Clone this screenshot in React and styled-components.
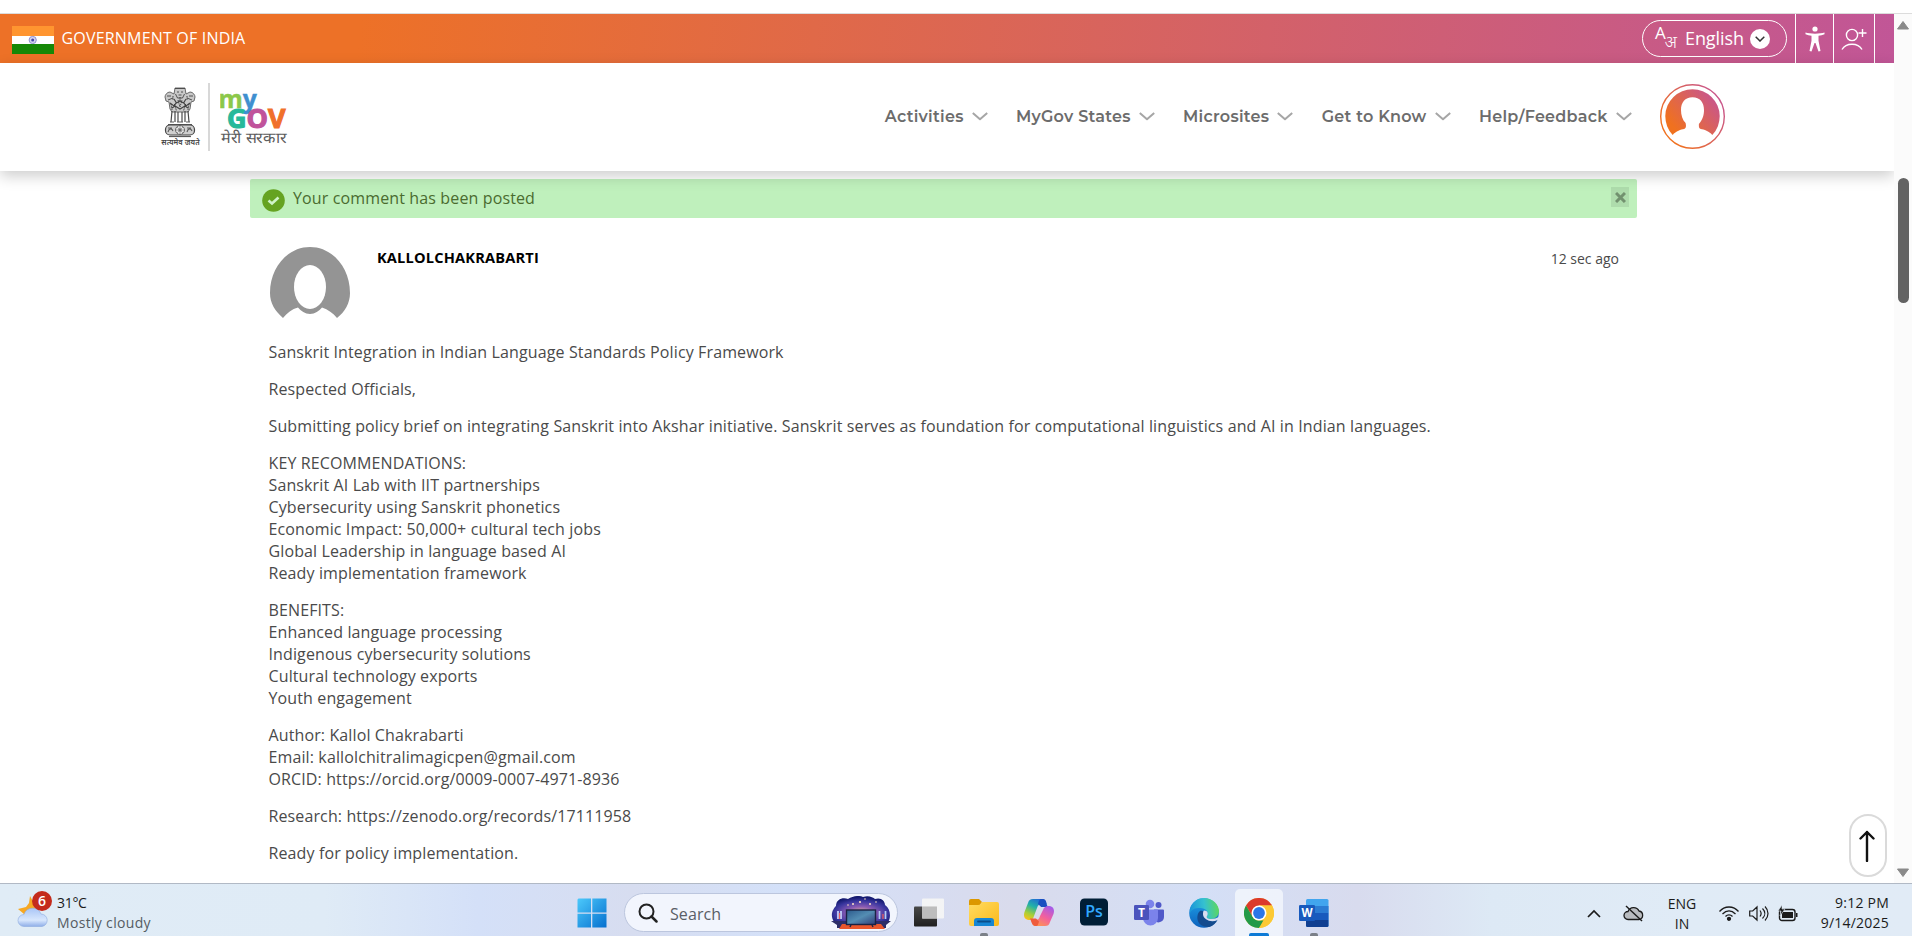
import React from 'react';
import styled, { createGlobalStyle } from 'styled-components';

const Global = createGlobalStyle`
  *{box-sizing:border-box}
  html,body{margin:0;padding:0;overflow:hidden;background:#fff}
  body{font-family:"Open Sans","Noto Sans",sans-serif;color:#4a4a4a}
  svg{display:block;flex:none}
  p{margin:0}
`;

const Screen = styled.div`width:1912px;height:936px;display:flex;flex-direction:column;background:#fff;overflow:hidden;`;
const BrowserEdge = styled.div`height:14px;flex:none;border-bottom:1px solid #dcdcdc;background:#fff;`;
const Viewport = styled.div`height:869px;flex:none;display:flex;`;
const Site = styled.div`width:1894px;display:flex;flex-direction:column;overflow:hidden;position:relative;`;

const TopBar = styled.div`height:49px;flex:none;display:flex;align-items:center;padding-left:12px;color:#fff;
  background:linear-gradient(95deg,#ed7127 0%,#ed7127 19%,#c15697 100%);`;
const Flag = styled.div`width:42px;height:28px;margin-top:2px;`;
const GovTitle = styled.div`margin-left:7.5px;font-size:16px;font-weight:500;letter-spacing:.19px;margin-right:auto;white-space:nowrap;margin-top:-2px;`;
const LangPill = styled.div`width:145px;height:37px;border:1px solid #fff;border-radius:19px;display:flex;align-items:center;padding:0 16px 0 12px;margin-right:8px;`;
const LangName = styled.span`font-size:18px;font-weight:500;margin-left:6px;line-height:24px;width:58px;white-space:nowrap;letter-spacing:-0.1px;margin-top:-1px;`;
const LangGlyph = styled.div`display:flex;align-items:flex-start;font-size:17px;line-height:16px;width:24px;height:28px;white-space:nowrap;
  span{margin-top:7px;font-size:17px;line-height:19px;margin-left:-1px;font-weight:300}`;
const LangCaret = styled.div`width:20px;height:20px;border-radius:50%;background:#fff;display:grid;place-items:center;margin-left:7px;flex:none;`;
const TopTool = styled.div`width:${p => p.$w}px;height:49px;border-left:1px solid #fff;display:flex;align-items:center;justify-content:center;`;

const Header = styled.header`height:108px;flex:none;display:flex;align-items:center;background:#fff;padding-left:161px;box-shadow:0 5px 14px rgba(0,0,0,.2);position:relative;z-index:2;`;
const EmblemBox = styled.div`width:38px;height:60px;display:flex;flex-direction:column;align-items:center;`;
const Motto = styled.div`font-size:7.4px;line-height:8px;font-weight:600;color:#444;white-space:nowrap;letter-spacing:.1px;padding-left:1px;`;
const Rule = styled.div`width:1.5px;height:68px;background:#d8d8d8;margin:0 10px 0 9px;`;
const LogoBox = styled.div`width:70px;height:72px;margin-top:-4px;`;
const Nav = styled.nav`margin-left:auto;display:flex;align-items:center;margin-bottom:2px;`;
const NavItem = styled.div`display:flex;align-items:center;margin-right:28.4px;`;
const NavLabel = styled.span`font-family:"Montserrat","Inter","Open Sans",sans-serif;font-weight:600;font-size:16px;color:#6c6c6c;letter-spacing:.26px;white-space:nowrap;margin-right:8px;`;
const Account = styled.div`margin:0 169px 2px 0;`;

const Content = styled.main`width:1387px;margin-left:250px;padding-top:8px;`;
const Alert = styled.div`height:39px;background:#bff0bc;border-radius:2px;display:flex;align-items:center;padding:0 8px 0 12px;`;
const AlertIcon = styled.div`margin-top:3px;`;
const AlertText = styled.span`font-size:16px;color:#4a6b2f;margin-left:8px;margin-right:auto;line-height:22px;margin-top:-1px;letter-spacing:.13px;`;
const CloseBtn = styled.div`width:18px;height:20px;background:#aedcac;display:grid;place-items:center;margin-top:-3px;`;
const Comment = styled.article`padding:29px 18px 0 19.5px;`;
const CommentHead = styled.div`display:flex;height:83px;`;
const AuthorName = styled.div`margin:-1px auto 0 27.5px;font-size:14.6px;font-weight:700;color:#000;line-height:22px;letter-spacing:.18px;`;
const Ago = styled.div`font-size:14px;line-height:22px;margin-top:1px;color:#4a4a4a;`;
const Body = styled.div`margin:11px 0 0 -1px;font-size:16px;line-height:22px;color:#4a4a4a;letter-spacing:.12px;p{margin-bottom:15px;white-space:pre-line}`;

const Scrollbar = styled.div`width:18px;background:#fbfbfb;display:flex;flex-direction:column;align-items:center;padding:6px 0 5px;`;
const Thumb = styled.div`width:11px;height:125px;border-radius:6px;background:#636363;margin-top:148px;margin-bottom:auto;`;
const ToTop = styled.div`position:absolute;left:1849px;top:800px;width:38px;height:63px;border:2px solid #dadada;border-radius:19px;background:#fff;display:grid;place-items:center;padding-right:2px;`;

const Taskbar = styled.footer`height:53px;flex:none;border-top:1px solid #b1b9c5;display:flex;
  background:linear-gradient(90deg,#e0ecf6 0%,#dfebf6 17%,#d4e0f8 25%,#d7ddf0 33%,#d4e1f9 41%,#d7ddf2 48%,#d9dbec 53%,#d4dff6 63%,#d8dbee 71%,#dde9f5 78%,#e0ebf6 88%,#e1ebf6 100%);
  font-family:"Open Sans","Noto Sans",sans-serif;color:#1b1b1b;`;
const Weather = styled.div`width:560px;display:flex;padding:7px 0 0 16px;`;
const WeatherText = styled.div`margin-left:5px;font-size:14px;line-height:20px;margin-top:2px;span{display:block;white-space:nowrap;letter-spacing:-.3px}span+span{color:#555c63;letter-spacing:.32px}`;
const Apps = styled.div`display:flex;padding-top:5px;margin-left:8px;`;
const AppSlot = styled.div`width:48px;height:47px;margin-right:7px;border-radius:5px 5px 0 0;background:${p => p.$active ? 'rgba(244,247,253,.8)' : 'transparent'};display:flex;flex-direction:column;align-items:center;padding-top:9px;`;
const Dot = styled.div`width:${p => p.$w}px;height:3px;border-radius:2px 2px 0 0;background:${p => p.$c};margin-top:auto;`;
const SearchBox = styled.div`width:274px;height:39px;border-radius:20px;background:#f2f5fd;border:1px solid #bcc6de;margin:4px 7px 0 1px;display:flex;align-items:center;padding:0 6px 0 13px;`;
const SearchText = styled.span`font-size:16px;color:#5a5e66;margin-left:12px;margin-right:auto;margin-top:2px;letter-spacing:.1px;`;
const Tray = styled.div`display:flex;margin-left:auto;align-items:flex-start;`;
const Lang = styled.div`width:32px;text-align:center;font-size:14px;line-height:20px;margin:10px 21px 0 22px;`;
const Clock = styled.div`width:91px;text-align:right;font-size:14px;line-height:20px;margin:9px 23px 0 0;white-space:nowrap;letter-spacing:.22px;`;
const TrayIcon = styled.div`height:52px;display:flex;align-items:center;margin-right:${p => p.$mr}px;padding-top:6px;`;

const NAV = ['Activities', 'MyGov States', 'Microsites', 'Get to Know', 'Help/Feedback'];

const COMMENT = [
  'Sanskrit Integration in Indian Language Standards Policy Framework',
  'Respected Officials,',
  'Submitting policy brief on integrating Sanskrit into Akshar initiative. Sanskrit serves as foundation for computational linguistics and AI in Indian languages.',
  'KEY RECOMMENDATIONS:\nSanskrit AI Lab with IIT partnerships\nCybersecurity using Sanskrit phonetics\nEconomic Impact: 50,000+ cultural tech jobs\nGlobal Leadership in language based AI\nReady implementation framework',
  'BENEFITS:\nEnhanced language processing\nIndigenous cybersecurity solutions\nCultural technology exports\nYouth engagement',
  'Author: Kallol Chakrabarti\nEmail: kallolchitralimagicpen@gmail.com\nORCID: https://orcid.org/0009-0007-4971-8936',
  'Research: https://zenodo.org/records/17111958',
  'Ready for policy implementation.',
];

const IndiaFlag = () => (
  <svg width="42" height="28" viewBox="0 0 42 28">
    <rect width="42" height="10" fill="#ff9530" /><rect y="10" width="42" height="8" fill="#fff" />
    <rect y="18" width="42" height="10" fill="#168807" />
    <circle cx="20.7" cy="14" r="3.6" fill="#d5d5f0" stroke="#8f8fd0" strokeWidth="1" />
    <circle cx="20.7" cy="14" r="1.5" fill="#4646a8" />
  </svg>
);

const Emblem = () => (
  <svg width="34" height="51" viewBox="0 0 34 51" fill="none" stroke="#5c5c5c" strokeWidth=".9">
    <path d="M12 1h10l1 6 4-2c3 0 5 3 5 5l-1 4-3 1-1 7-2 3H9l-2-3-1-7-3-1-1-4c0-2 2-5 5-5l4 2z" fill="#c9c9c9" />
    <path d="M12 1.500h10M14 5h2m2 0h2M15.500 8h3M12.500 7l2 4h5l2-4M4 9h4m18 0h4M5 13l5-2m19 2-5-2" stroke="#444" />
    <path d="M11 12l2.500 4 3.500-2 3.500 2 2.500-4M7 16l4 3 2-3m14 0-4 3-2-3M9 21l3-2 5 3 5-3 3 2" stroke="#444" strokeWidth="1.200" />
    <path d="M15 13l2 7 2-7M11.500 17l2 7m9-7-2 7M8 17l1 6m17-6-1 6M17 10v4M10 9v4m14-4v4" stroke="#333" strokeDasharray="1.500 .8" />
    <path d="M9 24l-1 11m4-11v11m3-10v10m4-10v10m3-11v11m3-11 1 11" strokeWidth="1.200" stroke="#4a4a4a" />
    <path d="M5 37.500h24M7 35h4m3 0h6m3 0h4" strokeWidth="1" />
    <rect x="2.500" y="38" width="29" height="10" rx="4.500" fill="#cfcfcf" strokeWidth="1.200" stroke="#444" />
    <circle cx="17" cy="43" r="4.500" fill="#e8e8e8" /><circle cx="17" cy="43" r="1.200" />
    <path d="M17 38.500v9M12.500 43h9M14 40l6 6m0-6-6 6" strokeWidth=".5" />
    <path d="M5 45c1-4 4-4 5-1m14 1c1-4 4-4 5-1M5 41h4m15 0h4" strokeWidth="1.100" />
    <path d="M6 49.500h22" strokeWidth="1.200" />
  </svg>
);

const MyGovLogo = () => (
  <svg width="70" height="72" viewBox="0 -12 70 72" fontFamily='"Open Sans",sans-serif' fontWeight="700">
    <text x="-1.500" y="16.500" fontSize="25" strokeWidth=".4" textLength="38.500" lengthAdjust="spacingAndGlyphs"><tspan fill="#8cc84a" stroke="#8cc84a">m</tspan><tspan fill="#3f8fd0" stroke="#3f8fd0">y</tspan></text>
    <text x="7" y="37" fontSize="26.500" strokeWidth="1.100" textLength="58.500" lengthAdjust="spacingAndGlyphs"><tspan fill="#26b99a" stroke="#26b99a">G</tspan><tspan fill="#c0539b" stroke="#c0539b">O</tspan><tspan fill="#f0702a" stroke="#f0702a">V</tspan></text>
    <text x="1" y="52" fontSize="15" fontWeight="300" fill="#5c5c5c" textLength="65.500" lengthAdjust="spacingAndGlyphs">मेरी सरकार</text>
  </svg>
);

const Caret = () => (
  <svg width="16" height="9" viewBox="0 0 16 9" fill="none" stroke="#a6a6a6" strokeWidth="2" strokeLinejoin="round"><path d="M.8 1l7.200 6.300L15.200 1" /></svg>
);

const UserAvatar = () => (
  <svg width="65" height="65" viewBox="0 0 65 65">
    <defs>
      <linearGradient id="av" x1=".1" y1=".75" x2=".9" y2=".2"><stop offset="0" stopColor="#f0711f" /><stop offset="1" stopColor="#c9568a" /></linearGradient>
    </defs>
    <circle cx="32.5" cy="32.5" r="31.8" fill="#fff" stroke="url(#av)" strokeWidth="1.4" />
    <path d="M12.7 51A27.2 27.2 0 1 1 52.3 51C49 47 44 45.5 40.8 45c-2-.5-2-2-1.9-5 4-5 5.1-9 5.1-14 0-7.500-4-12.700-11.500-12.700S21 18.500 21 26c0 5 1.500 10 4.600 13 .7 3 .5 5.500-1.500 6C21 45.500 16 47 12.700 51z" fill="url(#av)" />
  </svg>
);

const CommenterAvatar = () => (
  <svg width="80" height="72" viewBox="0 0 80 72">
    <path d="M13 71C5 64 0 56 0 46 0 20 18 0 40 0s40 20 40 46c0 10-5 19-13 25-4-5-9-8.500-15-10.500C49 64 45 67 40 67s-9-3-12-6.500C22 62 17 66 13 71z" fill="#949494" />
    <ellipse cx="40" cy="40" rx="16" ry="22" fill="#fff" />
  </svg>
);

const WeatherIcon = () => (
  <svg width="36" height="38" viewBox="0 0 36 38">
    <defs><linearGradient id="cl" x1="0" y1="0" x2="0" y2="1"><stop offset="0" stopColor="#a9c5f6" /><stop offset=".65" stopColor="#d8e7fd" /><stop offset="1" stopColor="#8faee8" /></linearGradient></defs>
    <path d="M14 5l5 9-1 12-10-3-6-5 8-2 3-4z" fill="#f7a823" />
    <path d="M8 35.500a6 6 0 0 1 0-12A9 9 0 0 1 25 23a6.300 6.300 0 0 1 1 12.500z" fill="url(#cl)" stroke="#8dabdf" strokeWidth=".6" />
    <circle cx="26" cy="10" r="10" fill="#c42b1c" />
    <text x="26" y="15" fontSize="14" fontWeight="600" fill="#fff" textAnchor="middle">6</text>
  </svg>
);

const WindowsIcon = () => (
  <svg width="30" height="30" viewBox="0 0 30 30">
    <defs><linearGradient id="wi" x1="0" y1="0" x2="1" y2="1"><stop offset="0" stopColor="#4cc9fb" /><stop offset="1" stopColor="#0670cf" /></linearGradient></defs>
    <path d="M1.500 .5H14v14H.5v-13zM15.300 .5H29.500v14H15.300zM.5 15.700H14v13.800H.5zM15.300 15.700h14.200v13.800H15.300z" fill="url(#wi)" />
  </svg>
);

const SearchArt = () => (
  <svg width="60" height="34" viewBox="0 0 60 34">
    <defs>
      <radialGradient id="gl" cx=".5" cy=".65" r=".6"><stop offset="0" stopColor="#f5c394" /><stop offset=".4" stopColor="#8a5bb3" /><stop offset=".75" stopColor="#3b37a0" /><stop offset="1" stopColor="#141a70" /></radialGradient>
      <linearGradient id="tv" x1="0" y1="0" x2="1" y2="1"><stop offset="0" stopColor="#2b5a8c" /><stop offset=".5" stopColor="#548db3" /><stop offset="1" stopColor="#303b76" /></linearGradient>
    </defs>
    <path d="M3 26C-2 18 3 12 5 10 5 3 12 1 17 3c5-3 11-4 15-2 5-2 10 0 12 2 6-2 10 2 10 6 6 4 6 13 3 17z" fill="url(#gl)" />
    <path d="M0 25h60l-5 4v3H6v-3z" fill="#2d2d68" /><path d="M11 28h39l4 5H8z" fill="#e9562c" />
    <rect x="15.500" y="14" width="29" height="14.500" fill="url(#tv)" stroke="#1b2244" strokeWidth="1.400" />
    <path d="M20 29l-1 2m22-2 1 2" stroke="#1b2244" strokeWidth="1.400" />
    <path d="M7 15v8m3-8v8" stroke="#c7d8ff" strokeWidth="1.700" /><path d="M8.500 17v6M52 18v5" stroke="#e65d62" strokeWidth="1.300" /><path d="M48.500 15v8m6-8v8" stroke="#b3cdf5" strokeWidth="1.700" />
    <g fill="#ffe3c4"><circle cx="22" cy="8" r="1" /><circle cx="29" cy="6" r="1.100" /><circle cx="34" cy="3" r=".8" /><circle cx="39" cy="8" r="1" /><circle cx="17" cy="9" r=".8" /><circle cx="45" cy="6" r=".8" /></g>
  </svg>
);

const TaskView = () => (
  <svg width="30" height="30" viewBox="0 0 30 30">
    <defs><linearGradient id="tk" x1="0" y1="0" x2="0" y2="1"><stop offset="0" stopColor="#484848" /><stop offset="1" stopColor="#202020" /></linearGradient></defs>
    <rect x="0" y="8.500" width="23" height="20" rx="1" fill="url(#tk)" />
    <rect x="8" y=".5" width="22" height="20" rx="1" fill="#f5f5f5" opacity=".93" /><rect x="8" y="8.500" width="15" height="12" fill="#bdbdbd" />
  </svg>
);

const Explorer = () => (
  <svg width="30" height="30" viewBox="0 0 30 30">
    <defs><linearGradient id="fo" x1="0" y1="0" x2="1" y2="1"><stop offset="0" stopColor="#ffdc62" /><stop offset="1" stopColor="#fbb91b" /></linearGradient></defs>
    <path d="M0 3q0-2 2-2h8l3 3-3 4H0z" fill="#dc9800" />
    <path d="M0 7h9q2 0 3-1.500l1-1.500h15q2 0 2 2v20q0 2-2 2H2q-2 0-2-2z" fill="url(#fo)" />
    <path d="M5 28v-5q0-3 3-3h14q3 0 3 3v5z" fill="#1686d4" /><path d="M9 23.500h12" stroke="#0a4f8c" strokeWidth="1.800" strokeLinecap="round" />
  </svg>
);

const Copilot = () => (
  <svg width="30" height="30" viewBox="0 0 30 30">
    <defs>
      <linearGradient id="c1" x1=".7" y1="0" x2=".2" y2="1"><stop offset="0" stopColor="#2066d8" /><stop offset=".4" stopColor="#22b1a8" /><stop offset=".75" stopColor="#a9cf35" /><stop offset="1" stopColor="#f6c21c" /></linearGradient>
      <linearGradient id="c2" x1=".8" y1="0" x2=".2" y2="1"><stop offset="0" stopColor="#a35bea" /><stop offset=".5" stopColor="#f2609e" /><stop offset="1" stopColor="#ff9a4a" /></linearGradient>
    </defs>
    <path d="M9 1h9c3 0 4 2 4.500 5H18c-3 0-4 1-5 4l-3 8c-1 3-2 4-4 4-5 0-7-3-5.500-8L4 5c1-3 2-4 5-4z" fill="url(#c1)" />
    <path d="M18 1c3 0 4 1 4.700 5 .3 2 1 3 3 3h-8.500L14 6c1-3 1-5 4-5z" fill="#1a4fc0" />
    <path d="M21 28h-9c-3 0-4-2-4.500-6H11c3 0 4-1 5-4l3-6c1-3 3-4 5-4 5 0 7 3 5.500 8L26 24c-1 3-2 4-5 4z" fill="url(#c2)" />
    <path d="M12 28c-3 0-4-2-5-5-.5-2-1-2.500-2-2.500h7l3 3c-1 3-1 4.500-3 4.500z" fill="#ef5b3c" />
  </svg>
);

const Photoshop = () => (
  <svg width="30" height="30" viewBox="0 0 30 30">
    <rect x="1" y=".5" width="28" height="27" rx="4.500" fill="#001e36" />
    <text x="15" y="19" fontSize="16" fontWeight="600" fill="#31a8ff" textAnchor="middle">Ps</text>
  </svg>
);

const Teams = () => (
  <svg width="30" height="30" viewBox="0 0 30 30">
    <circle cx="24.500" cy="7" r="3" fill="#5059c9" /><path d="M20 11.500h9q1 0 1 1V19a5.500 5.500 0 0 1-10 3z" fill="#5059c9" />
    <circle cx="16" cy="6" r="4.300" fill="#7b83eb" /><path d="M9 11.500h14q1 0 1 1V20a7.500 7.500 0 0 1-15 0z" fill="#7b83eb" />
    <rect x="0" y="7" width="15" height="15" rx="1.300" fill="#4b53bc" />
    <text x="7.500" y="18.800" fontSize="12" fontWeight="700" fill="#fff" textAnchor="middle">T</text>
  </svg>
);

const Edge = () => (
  <svg width="30" height="30" viewBox="0 0 30 30">
    <defs>
      <linearGradient id="e1" x1="0" y1=".4" x2="1" y2=".3"><stop offset="0" stopColor="#1c96d8" /><stop offset=".5" stopColor="#35c1d0" /><stop offset="1" stopColor="#5fd857" /></linearGradient>
      <linearGradient id="e2" x1="0" y1="0" x2="0" y2="1"><stop offset="0" stopColor="#20a4e8" /><stop offset="1" stopColor="#0d61bd" /></linearGradient>
    </defs>
    <circle cx="15" cy="15" r="14.800" fill="url(#e2)" />
    <path d="M1 11C4 3 9 0 15 0c9 0 15 7 15 13 0 5-4 8-8 8-3 0-5-1-4-3 2-4-1-8-7-8C6 10 2 11 1 16z" fill="url(#e1)" />
    <path d="M11 13c-4 3-5 16 9 16 4-1 7-4 8.500-7-6 3-14 0-13.500-8-1-1-3-1.500-4-1z" fill="#144b8e" />
    <path d="M15 12.500c4 0 4.500 3.500 3 5.500-1 2 1 3 4 3 3 0 6-1 7.500-2 .5 1 0 2-1 3-6 3-14 0-14.500-5.500 0-2 0-3 1-4z" fill="#d9def0" />
  </svg>
);

const Chrome = () => (
  <svg width="30" height="30" viewBox="0 0 30 30">
    <circle cx="15" cy="15" r="15" fill="#fcc934" />
    <path d="M2 7.500A15 15 0 0 1 28 7.500H15L8.500 18.750z" fill="#dc3a2c" />
    <path d="M2 7.500 8.500 18.750Q11 23 15 22.500h6.500L15 30A15 15 0 0 1 2 7.500z" fill="#239a49" /><path d="M21.500 18.750 15 30a15 15 0 0 0 13-22.500H15z" fill="#fcc934" />
    <circle cx="15" cy="15" r="7.500" fill="#fff" /><circle cx="15" cy="15" r="5.900" fill="#2b76e8" />
  </svg>
);

const Word = () => (
  <svg width="30" height="30" viewBox="0 0 30 30">
    <rect x="7" y="1" width="22.500" height="28" rx="1.500" fill="#41a5ee" /><path d="M7 8h22.500v7H7z" fill="#2b7cd3" /><path d="M7 15h22.500v7H7z" fill="#185abd" /><path d="M7 22h22.500v5.500q0 1.500-1.500 1.500H8.500Q7 29 7 27.500z" fill="#103f91" />
    <rect x="0" y="7" width="16" height="16" rx="1.300" fill="#185abd" />
    <text x="8" y="19" fontSize="11.500" fontWeight="700" fill="#fff" textAnchor="middle">W</text>
  </svg>
);

const GREY = '#7b8088';
const APPS = [
  { Icon: TaskView }, { Icon: Explorer, dot: [8, GREY] }, { Icon: Copilot }, { Icon: Photoshop },
  { Icon: Teams }, { Icon: Edge }, { Icon: Chrome, dot: [20, '#0d7ad6'], active: true }, { Icon: Word, dot: [8, GREY] },
];

export default function App() {
  return (
    <Screen>
      <Global />
      <BrowserEdge />
      <Viewport>
        <Site>
          <TopBar>
            <Flag><IndiaFlag /></Flag>
            <GovTitle>GOVERNMENT OF INDIA</GovTitle>
            <LangPill>
              <LangGlyph>A<span>अ</span></LangGlyph>
              <LangName>English</LangName>
              <LangCaret><svg width="10" height="6" viewBox="0 0 10 6" fill="none" stroke="#333" strokeWidth="1.500"><path d="M.7 .7 5 5 9.300 .7" /></svg></LangCaret>
            </LangPill>
            <TopTool $w={38}>
              <svg width="20" height="26" viewBox="0 0 20 26" fill="#fff"><circle cx="10" cy="3" r="2.600" /><path d="M.5 6.500c4 1.500 15 1.500 19 0v1.800c-2 .8-4 1.200-6 1.500v5L15.500 25l-2 .5L10.500 17h-1L6.500 25.500l-2-.5 2-10.200v-5c-2-.3-4-.7-6-1.500z" /></svg>
            </TopTool>
            <TopTool $w={41}>
              <svg width="26" height="22" viewBox="0 0 26 22" fill="none" stroke="#fff" strokeWidth="1.400"><circle cx="11" cy="7" r="5.600" /><path d="M1 21.500c4-7 16-7 20 0M21.500 1v8M17.500 5h8" /></svg>
            </TopTool>
            <TopTool $w={20} />
          </TopBar>
          <Header>
            <EmblemBox><Emblem /><Motto>सत्यमेव जयते</Motto></EmblemBox>
            <Rule />
            <LogoBox><MyGovLogo /></LogoBox>
            <Nav>
              {NAV.map(label => <NavItem key={label}><NavLabel>{label}</NavLabel><Caret /></NavItem>)}
            </Nav>
            <Account><UserAvatar /></Account>
          </Header>
          <Content>
            <Alert>
              <AlertIcon><svg width="23" height="23" viewBox="0 0 23 23"><circle cx="11.500" cy="11.500" r="11.300" fill="#65a321" /><path d="M6.500 11.500l3.500 3 6.500-6" fill="none" stroke="#d0f3c8" strokeWidth="2.600" /></svg></AlertIcon>
              <AlertText>Your comment has been posted</AlertText>
              <CloseBtn><svg width="11" height="11" viewBox="0 0 11 11"><path d="M1 1l9 9M10 1l-9 9" stroke="#72916f" strokeWidth="3" /></svg></CloseBtn>
            </Alert>
            <Comment>
              <CommentHead>
                <CommenterAvatar />
                <AuthorName>KALLOLCHAKRABARTI</AuthorName>
                <Ago>12 sec ago</Ago>
              </CommentHead>
              <Body>{COMMENT.map(t => <p key={t}>{t}</p>)}</Body>
            </Comment>
          </Content>
          <ToTop><svg width="16" height="32" viewBox="0 0 16 32" fill="none" stroke="#111" strokeWidth="2.400" strokeLinecap="round" strokeLinejoin="round"><path d="M8 31V2M1.500 8.500 8 2l6.500 6.500" /></svg></ToTop>
        </Site>
        <Scrollbar>
          <svg width="14" height="10" viewBox="0 0 14 10"><path d="M7 1.500 12.500 9h-11z" fill="#8a8a8a" stroke="#8a8a8a" strokeLinejoin="round" /></svg>
          <Thumb />
          <svg width="14" height="10" viewBox="0 0 14 10"><path d="M7 8.500 12.500 1h-11z" fill="#8a8a8a" stroke="#8a8a8a" strokeLinejoin="round" /></svg>
        </Scrollbar>
      </Viewport>
      <Taskbar>
        <Weather>
          <WeatherIcon />
          <WeatherText><span>31°C</span><span>Mostly cloudy</span></WeatherText>
        </Weather>
        <Apps>
          <AppSlot><WindowsIcon /></AppSlot>
          <SearchBox>
            <svg width="20" height="20" viewBox="0 0 20 20" fill="none" stroke="#222" strokeWidth="2"><circle cx="8.500" cy="8.500" r="7" /><path d="M13.500 13.500l5 5" strokeWidth="2.500" strokeLinecap="round" /></svg>
            <SearchText>Search</SearchText>
            <SearchArt />
          </SearchBox>
          {APPS.map(({ Icon, dot, active }, i) => (
            <AppSlot key={i} $active={active}><Icon />{dot && <Dot $w={dot[0]} $c={dot[1]} />}</AppSlot>
          ))}
        </Apps>
        <Tray>
          <TrayIcon $mr={22}><svg width="14" height="9" viewBox="0 0 14 9" fill="none" stroke="#1b1b1b" strokeWidth="1.700"><path d="M1 8l6-6 6 6" /></svg></TrayIcon>
          <TrayIcon $mr={0}><svg width="21" height="17" viewBox="0 0 21 17"><path d="M5 14.500a4 4 0 0 1 0-8 6 6 0 0 1 11-.5 4.300 4.300 0 0 1 0 8.500z" fill="#b9bcc0" stroke="#1b1b1b" strokeWidth="1.300" /><path d="M3 1l16 15" stroke="#1b1b1b" strokeWidth="1.400" /></svg></TrayIcon>
          <Lang>ENG<br />IN</Lang>
          <TrayIcon $mr={10}><svg width="20" height="15" viewBox="0 0 20 15" fill="none" stroke="#1b1b1b" strokeWidth="1.300"><path d="M.5 5.500c5-6 14-6 19 0M3.500 8c4-4 9-4 13 0M6.500 10.500c2-2.200 5-2.200 7 0" /><circle cx="10" cy="12.800" r="1.500" fill="#1b1b1b" /></svg></TrayIcon>
          <TrayIcon $mr={9}><svg width="20" height="17" viewBox="0 0 20 17" fill="none" stroke="#1b1b1b" strokeWidth="1.200"><path d="M.7 6h3L8 2v13l-4.300-4h-3zM11 5.500c1.500 2 1.500 4 0 6M13.500 3.500c3 3 3 7 0 10M16 1.500c4 4 4 10 0 14" /></svg></TrayIcon>
          <TrayIcon $mr={0}><svg width="20" height="17" viewBox="0 0 20 17"><rect x="1.500" y="4.500" width="15.500" height="11" rx="2.500" fill="none" stroke="#1b1b1b" strokeWidth="1.400" /><path d="M4 7h11v6H4z" fill="#1b1b1b" /><path d="M18 8v4h1.500V8z" fill="#1b1b1b" /><path d="M4 0L0 6h3l-1 5 5-7H4z" fill="#1b1b1b" stroke="#e1ebf6" strokeWidth=".6" /></svg></TrayIcon>
          <Clock>9:12 PM<br />9/14/2025</Clock>
        </Tray>
      </Taskbar>
    </Screen>
  );
}
